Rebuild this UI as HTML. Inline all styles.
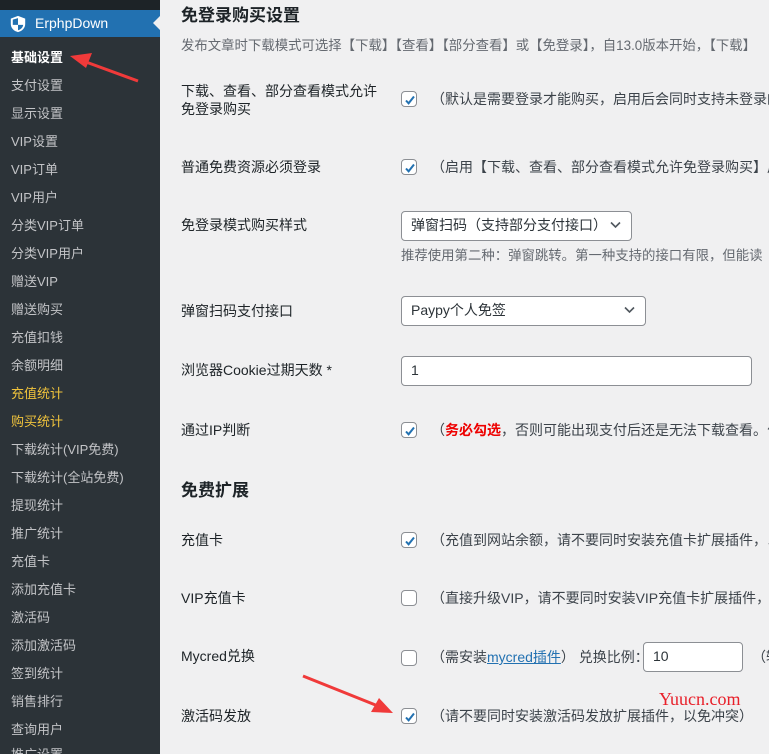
<!DOCTYPE html>
<html><head><meta charset="utf-8"><style>
*{margin:0;padding:0;box-sizing:border-box}
html{width:769px;height:754px;overflow:hidden}
body{width:769px;height:754px;overflow:hidden;background:#f0f0f1;font-family:"Liberation Sans","Noto Sans CJK SC",sans-serif;font-size:14px;color:#1d2327;position:relative}
.side{position:absolute;left:0;top:0;width:160px;height:754px;background:#2c3338;overflow:hidden}
.side .top{position:absolute;left:0;top:0;width:160px;height:10px;background:#1d2327}
.side .hd{position:absolute;left:0;top:10px;width:160px;height:27px;background:#2271b1;color:#fff;font-size:14px;line-height:27px;padding-left:35px}
.side .hd svg{position:absolute;left:9px;top:5px}
.side .notch{position:absolute;right:0;top:6px;width:0;height:0;border:7px solid transparent;border-right-color:#f0f0f1}
.mi{position:absolute;left:11px;color:#c3c4c7;font-size:13px;line-height:18px;white-space:nowrap}
.mi.cur{color:#fff;font-weight:bold}
.mi.y{color:#f0c33c}
.a{position:absolute;white-space:nowrap;line-height:18px}
.lab{left:181px;color:#1d2327;font-size:14px}
h2{position:absolute;font-size:17px;font-weight:bold;color:#1d2327;left:181px;white-space:nowrap}
.cb{position:absolute;width:16px;height:16px;border:1px solid #8c8f94;border-radius:4px;background:#fff}
.cb svg{position:absolute;left:1px;top:1px}
.box{position:absolute;background:#fff;border:1px solid #8c8f94;border-radius:4px;font-size:14px;line-height:27px;padding-left:9px;color:#2c3338}
.box .ch{position:absolute;right:10px;top:9px}
.t{color:#3c434a;font-size:14px}
.desc{color:#646970;font-size:13.4px}
</style></head><body>
<div class="side">
<div class="top"></div>
<div class="hd"><svg width="18" height="18" viewBox="0 0 20 20"><path d="M10 1L2 4v6c0 5 4 8 8 9 4-1 8-4 8-9V4z" fill="#fff"/><path d="M10 3.5v7.5H4.2V5.2zM10 11h5.8c-.5 3.2-2.8 5.2-5.8 6z" fill="#2271b1"/></svg>ErphpDown<div class="notch"></div></div>
<div class="mi cur" style="top:49px">基础设置</div>
<div class="mi" style="top:77px">支付设置</div>
<div class="mi" style="top:105px">显示设置</div>
<div class="mi" style="top:133px">VIP设置</div>
<div class="mi" style="top:161px">VIP订单</div>
<div class="mi" style="top:189px">VIP用户</div>
<div class="mi" style="top:217px">分类VIP订单</div>
<div class="mi" style="top:245px">分类VIP用户</div>
<div class="mi" style="top:273px">赠送VIP</div>
<div class="mi" style="top:301px">赠送购买</div>
<div class="mi" style="top:329px">充值扣钱</div>
<div class="mi" style="top:357px">余额明细</div>
<div class="mi y" style="top:385px">充值统计</div>
<div class="mi y" style="top:413px">购买统计</div>
<div class="mi" style="top:441px">下载统计(VIP免费)</div>
<div class="mi" style="top:469px">下载统计(全站免费)</div>
<div class="mi" style="top:497px">提现统计</div>
<div class="mi" style="top:525px">推广统计</div>
<div class="mi" style="top:553px">充值卡</div>
<div class="mi" style="top:581px">添加充值卡</div>
<div class="mi" style="top:609px">激活码</div>
<div class="mi" style="top:637px">添加激活码</div>
<div class="mi" style="top:665px">签到统计</div>
<div class="mi" style="top:693px">销售排行</div>
<div class="mi" style="top:721px">查询用户</div>
<div class="mi" style="top:746px">推广设置</div>
</div>

<h2 style="top:1px">免登录购买设置</h2>
<div class="a desc" style="left:181px;top:37px">发布文章时下载模式可选择【下载】【查看】【部分查看】或【免登录】，自13.0版本开始，【下载】</div>

<div class="a lab" style="top:82px">下载、查看、部分查看模式允许<br>免登录购买</div>
<div class="cb" style="left:401px;top:91px"><svg width="14" height="14" viewBox="0 0 14 14"><path d="M3 7.5l2.6 2.8L11 3.5" stroke="#2271b1" stroke-width="2" fill="none"/></svg></div>
<div class="a t" style="left:431px;top:90px">（默认是需要登录才能购买，启用后会同时支持未登录的</div>

<div class="a lab" style="top:158px">普通免费资源必须登录</div>
<div class="cb" style="left:401px;top:159px"><svg width="14" height="14" viewBox="0 0 14 14"><path d="M3 7.5l2.6 2.8L11 3.5" stroke="#2271b1" stroke-width="2" fill="none"/></svg></div>
<div class="a t" style="left:431px;top:158px">（启用【下载、查看、部分查看模式允许免登录购买】后</div>

<div class="a lab" style="top:216px">免登录模式购买样式</div>
<div class="box" style="left:401px;top:211px;width:231px;height:30px">弹窗扫码（支持部分支付接口）<svg class="ch" width="11" height="8" viewBox="0 0 11 8"><path d="M1 1.5l4.5 4.5L10 1.5" stroke="#50575e" stroke-width="1.6" fill="none"/></svg></div>
<div class="a desc" style="left:401px;top:247px">推荐使用第二种：弹窗跳转。第一种支持的接口有限，但能读</div>

<div class="a lab" style="top:302px">弹窗扫码支付接口</div>
<div class="box" style="left:401px;top:296px;width:245px;height:30px">Paypy个人免签<svg class="ch" width="11" height="8" viewBox="0 0 11 8"><path d="M1 1.5l4.5 4.5L10 1.5" stroke="#50575e" stroke-width="1.6" fill="none"/></svg></div>

<div class="a lab" style="top:361px">浏览器Cookie过期天数 *</div>
<div class="box" style="left:401px;top:356px;width:351px;height:30px">1</div>

<div class="a lab" style="top:421px">通过IP判断</div>
<div class="cb" style="left:401px;top:422px"><svg width="14" height="14" viewBox="0 0 14 14"><path d="M3 7.5l2.6 2.8L11 3.5" stroke="#2271b1" stroke-width="2" fill="none"/></svg></div>
<div class="a t" style="left:431px;top:421px">（<b style="color:#e00">务必勾选</b>，否则可能出现支付后还是无法下载查看。勾</div>

<h2 style="top:476px">免费扩展</h2>

<div class="a lab" style="top:531px">充值卡</div>
<div class="cb" style="left:401px;top:532px"><svg width="14" height="14" viewBox="0 0 14 14"><path d="M3 7.5l2.6 2.8L11 3.5" stroke="#2271b1" stroke-width="2" fill="none"/></svg></div>
<div class="a t" style="left:431px;top:531px">（充值到网站余额，请不要同时安装充值卡扩展插件，以</div>

<div class="a lab" style="top:589px">VIP充值卡</div>
<div class="cb" style="left:401px;top:590px"></div>
<div class="a t" style="left:431px;top:589px">（直接升级VIP，请不要同时安装VIP充值卡扩展插件，以</div>

<div class="a lab" style="top:647px">Mycred兑换</div>
<div class="cb" style="left:401px;top:650px"></div>
<div class="a t" style="left:431px;top:648px">（需安装<span style="color:#2271b1;text-decoration:underline">mycred插件</span>） 兑换比例：</div>
<div class="box" style="left:643px;top:642px;width:100px;height:30px">10</div>
<div class="a t" style="left:752px;top:648px">（输</div>

<div class="a lab" style="top:707px">激活码发放</div>
<div class="cb" style="left:401px;top:708px"><svg width="14" height="14" viewBox="0 0 14 14"><path d="M3 7.5l2.6 2.8L11 3.5" stroke="#2271b1" stroke-width="2" fill="none"/></svg></div>
<div class="a t" style="left:431px;top:707px">（请不要同时安装激活码发放扩展插件，以免冲突）</div>

<div class="a" style="left:659px;top:690px;font-family:'Liberation Serif',serif;font-size:18px;color:#e8202a">Yuucn.com</div>

<svg style="position:absolute;left:0;top:0" width="769" height="754">
<path d="M138 81L86 62" stroke="#f03a3a" stroke-width="3"/>
<path d="M70 56L92 53L86 68z" fill="#f03a3a"/>
<path d="M303 676L378 706" stroke="#f03a3a" stroke-width="3"/>
<path d="M393 713L371 712L379 698z" fill="#f03a3a"/>
</svg>
</body></html>
